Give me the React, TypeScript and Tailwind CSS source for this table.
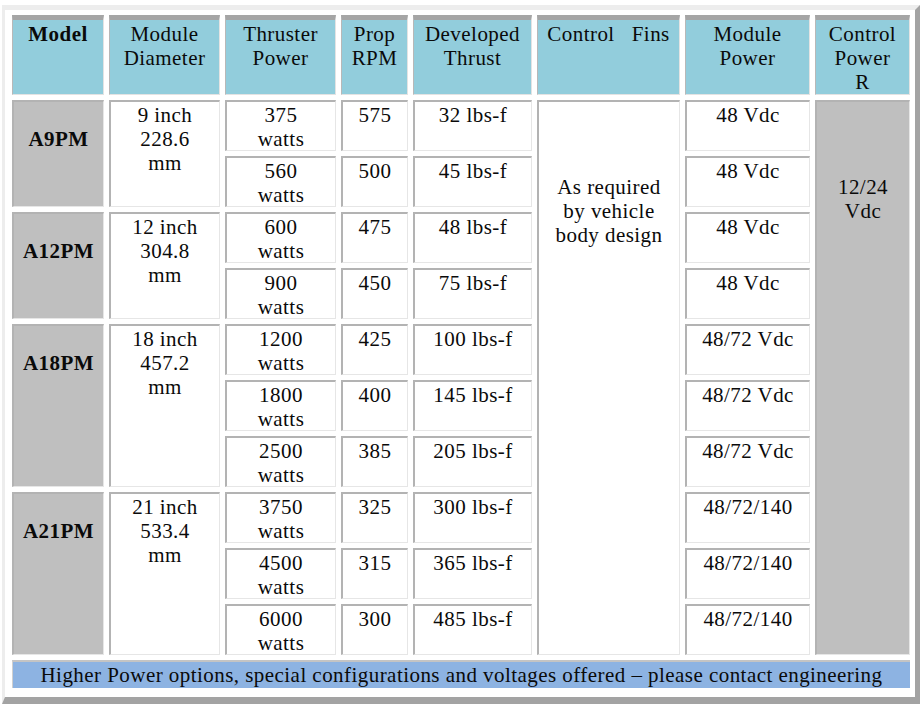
const head =
  "flex justify-center text-center pt-[2px] bg-[#92cddc] border-t-[5px] border-t-[#a5a5a5] border-l border-l-[#b8b8b8] border-r border-r-[#e3e3e3] border-b border-b-[#e3e3e3]";
const cell =
  "text-center bg-white pt-[1px] border-t-2 border-l-2 border-t-[#b3b3b3] border-l-[#b3b3b3] border-r border-b border-r-[#e6e6e6] border-b-[#e6e6e6]";
const grayCell =
  "text-center bg-[#bfbfbf] pt-[1px] border-t-2 border-l-2 border-t-[#b3b3b3] border-l-[#b3b3b3] border-r border-b border-r-[#e6e6e6] border-b-[#e6e6e6]";

type Group = {
  model: string;
  inch: string;
  mm: string;
  span: string;
  rows: { watts: string; rpm: string; thrust: string; power: string }[];
};

const groups: Group[] = [
  {
    model: "A9PM",
    inch: "9 inch",
    mm: "228.6",
    span: "row-span-2",
    rows: [
      { watts: "375", rpm: "575", thrust: "32 lbs-f", power: "48 Vdc" },
      { watts: "560", rpm: "500", thrust: "45 lbs-f", power: "48 Vdc" },
    ],
  },
  {
    model: "A12PM",
    inch: "12 inch",
    mm: "304.8",
    span: "row-span-2",
    rows: [
      { watts: "600", rpm: "475", thrust: "48 lbs-f", power: "48 Vdc" },
      { watts: "900", rpm: "450", thrust: "75 lbs-f", power: "48 Vdc" },
    ],
  },
  {
    model: "A18PM",
    inch: "18 inch",
    mm: "457.2",
    span: "row-span-3",
    rows: [
      { watts: "1200", rpm: "425", thrust: "100 lbs-f", power: "48/72 Vdc" },
      { watts: "1800", rpm: "400", thrust: "145 lbs-f", power: "48/72 Vdc" },
      { watts: "2500", rpm: "385", thrust: "205 lbs-f", power: "48/72 Vdc" },
    ],
  },
  {
    model: "A21PM",
    inch: "21 inch",
    mm: "533.4",
    span: "row-span-3",
    rows: [
      { watts: "3750", rpm: "325", thrust: "300 lbs-f", power: "48/72/140" },
      { watts: "4500", rpm: "315", thrust: "365 lbs-f", power: "48/72/140" },
      { watts: "6000", rpm: "300", thrust: "485 lbs-f", power: "48/72/140" },
    ],
  },
];

export default function App() {
  let first = true;
  return (
    <div
      className="w-[923px] h-[704px] bg-white pt-[5px] pl-[2px] overflow-hidden text-[#0a0a0a] text-[21px] leading-[24px] tracking-[0.45px]"
      style={{ fontFamily: '"Liberation Serif", "DejaVu Serif", serif' }}
    >
      <div className="w-[918px] h-[699px] pl-[7px] pt-[5px] border-t-[5px] border-l-[3px] border-t-[#ededed] border-l-[#ededed] border-r-[5px] border-b-[7px] border-r-[#a3a3a3] border-b-[#a3a3a3]">
        <div className="grid grid-cols-[92px_111px_111px_67px_119px_143px_125px_95px] grid-rows-[80px_repeat(10,51px)_28px] gap-[5px]">
          <div className={head}>
            <span className="font-bold">Model</span>
          </div>
          <div className={head}>
            <span>
              Module
              <br />
              Diameter
            </span>
          </div>
          <div className={head}>
            <span>
              Thruster
              <br />
              Power
            </span>
          </div>
          <div className={head}>
            <span>
              Prop
              <br />
              RPM
            </span>
          </div>
          <div className={head}>
            <span>
              Developed
              <br />
              Thrust
            </span>
          </div>
          <div className={head}>
            <span className="whitespace-pre">Control   Fins</span>
          </div>
          <div className={head}>
            <span>
              Module
              <br />
              Power
            </span>
          </div>
          <div className={head}>
            <span>
              Control
              <br />
              Power
              <br />R
            </span>
          </div>

          {groups.map((g) =>
            g.rows.map((r, i) => {
              const out = [];
              if (i === 0) {
                out.push(
                  <div key={g.model + "m"} className={`${grayCell} ${g.span} pt-[25px] font-bold`}>
                    {g.model}
                  </div>,
                  <div key={g.model + "d"} className={`${cell} ${g.span}`}>
                    {g.inch}
                    <br />
                    {g.mm}
                    <br />
                    mm
                  </div>
                );
              }
              out.push(
                <div key={g.model + i + "w"} className={cell}>
                  {r.watts}
                  <br />
                  watts
                </div>,
                <div key={g.model + i + "r"} className={cell}>
                  {r.rpm}
                </div>,
                <div key={g.model + i + "t"} className={cell}>
                  {r.thrust}
                </div>
              );
              if (first) {
                out.push(
                  <div key="fins" className={`${cell} row-span-10 pt-[73px]`}>
                    As required
                    <br />
                    by vehicle
                    <br />
                    body design
                  </div>
                );
              }
              out.push(
                <div key={g.model + i + "p"} className={cell}>
                  {r.power}
                </div>
              );
              if (first) {
                out.push(
                  <div key="ctrl" className={`${grayCell} row-span-10 pt-[73px]`}>
                    12/24
                    <br />
                    Vdc
                  </div>
                );
                first = false;
              }
              return out;
            })
          )}

          <div className="col-span-8 flex items-center justify-center bg-[#8db3e2] border-t-2 border-t-[#c4c4c4] border-l border-l-[#d0d0d0]">
            Higher Power options, special configurations and voltages offered – please contact engineering
          </div>
        </div>
      </div>
    </div>
  );
}
